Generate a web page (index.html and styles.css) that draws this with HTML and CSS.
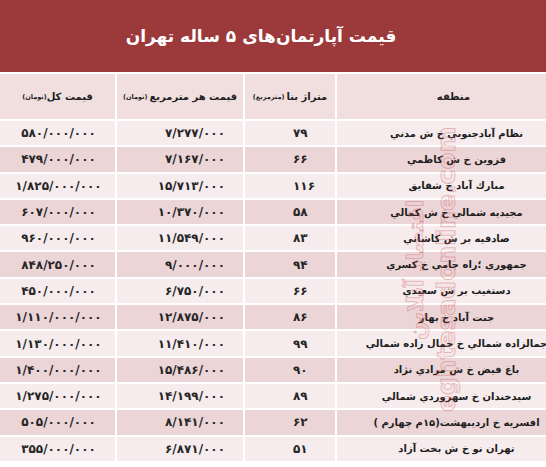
FILE: index.html
```html
<!DOCTYPE html>
<html lang="fa">
<head>
<meta charset="utf-8">
<title>قیمت آپارتمان‌های ۵ ساله تهران</title>
<link rel="stylesheet" href="styles.css">
</head>
<body>
<div class="page">
  <header class="title">قیمت آپارتمان‌های ۵ ساله تهران</header>
  <div class="table" dir="rtl">
    <div class="row head">
      <div class="cell region">منطقه</div>
      <div class="cell area">متراژ بنا <small>(مترمربع)</small></div>
      <div class="cell sqm">قیمت هر مترمربع <small>(تومان)</small></div>
      <div class="cell total">قیمت کل<small>(تومان)</small></div>
    </div>
    <div class="row light"><div class="cell region">نظام آبادجنوبي خ ش مدني</div><div class="cell area num">۷۹</div><div class="cell sqm num">۷/۲۷۷/۰۰۰</div><div class="cell total num">۵۸۰/۰۰۰/۰۰۰</div></div>
    <div class="row dark"><div class="cell region">قزوین خ ش کاظمي</div><div class="cell area num">۶۶</div><div class="cell sqm num">۷/۱۶۷/۰۰۰</div><div class="cell total num">۴۷۹/۰۰۰/۰۰۰</div></div>
    <div class="row light"><div class="cell region">مبارك آباد خ شقايق</div><div class="cell area num">۱۱۶</div><div class="cell sqm num">۱۵/۷۱۳/۰۰۰</div><div class="cell total num">۱/۸۲۵/۰۰۰/۰۰۰</div></div>
    <div class="row dark"><div class="cell region">مجيديه شمالي خ ش كمالي</div><div class="cell area num">۵۸</div><div class="cell sqm num">۱۰/۳۷۰/۰۰۰</div><div class="cell total num">۶۰۷/۰۰۰/۰۰۰</div></div>
    <div class="row light"><div class="cell region">صادقيه بر ش كاشاني</div><div class="cell area num">۸۳</div><div class="cell sqm num">۱۱/۵۴۹/۰۰۰</div><div class="cell total num">۹۶۰/۰۰۰/۰۰۰</div></div>
    <div class="row dark"><div class="cell region">جمهوري ؛راه جامي خ كسري</div><div class="cell area num">۹۴</div><div class="cell sqm num">۹/۰۰۰/۰۰۰</div><div class="cell total num">۸۴۸/۲۵۰/۰۰۰</div></div>
    <div class="row light"><div class="cell region">دستغيب بر ش سعيدي</div><div class="cell area num">۶۶</div><div class="cell sqm num">۶/۷۵۰/۰۰۰</div><div class="cell total num">۴۵۰/۰۰۰/۰۰۰</div></div>
    <div class="row dark"><div class="cell region">جنت آباد خ بهار</div><div class="cell area num">۸۶</div><div class="cell sqm num">۱۲/۸۷۵/۰۰۰</div><div class="cell total num">۱/۱۱۰/۰۰۰/۰۰۰</div></div>
    <div class="row light"><div class="cell region">جمالزاده شمالي خ جمال زاده شمالي</div><div class="cell area num">۹۹</div><div class="cell sqm num">۱۱/۴۱۰/۰۰۰</div><div class="cell total num">۱/۱۳۰/۰۰۰/۰۰۰</div></div>
    <div class="row dark"><div class="cell region">باغ فيض خ ش مرادي نژاد</div><div class="cell area num">۹۰</div><div class="cell sqm num">۱۵/۴۸۶/۰۰۰</div><div class="cell total num">۱/۴۰۰/۰۰۰/۰۰۰</div></div>
    <div class="row light"><div class="cell region">سيدخندان خ سهروردي شمالي</div><div class="cell area num">۸۹</div><div class="cell sqm num">۱۴/۱۹۹/۰۰۰</div><div class="cell total num">۱/۲۷۵/۰۰۰/۰۰۰</div></div>
    <div class="row dark"><div class="cell region">افسريه خ ارديبهشت(۱۵م چهارم )</div><div class="cell area num">۶۲</div><div class="cell sqm num">۸/۱۴۱/۰۰۰</div><div class="cell total num">۵۰۵/۰۰۰/۰۰۰</div></div>
    <div class="row light"><div class="cell region">تهران نو خ ش بخت آزاد</div><div class="cell area num">۵۱</div><div class="cell sqm num">۶/۸۷۱/۰۰۰</div><div class="cell total num">۳۵۵/۰۰۰/۰۰۰</div></div>
  </div>
  <div class="watermark" aria-hidden="true">
    <span class="wm-fa">اقتصاد آنلاین</span>
    <span class="wm-en">eghtesadonline.com</span>
  </div>
</div>
</body>
</html>
```
FILE: styles.css
```css
html, body {
  margin: 0;
  padding: 0;
  background: #ffffff;
}
body {
  font-family: "DejaVu Sans", "Noto Sans", sans-serif;
  color: #1e1e1e;
}
.page {
  position: relative;
  width: 546px;
  height: 467px;
  overflow: hidden;
}
.title {
  height: 72px;
  background: #9c3a3b;
  color: #ffffff;
  font-weight: bold;
  font-size: 17px;
  display: flex;
  align-items: center;
  justify-content: center;
  direction: rtl;
  padding-right: 24px;
  box-sizing: border-box;
}
.table {
  margin-top: 2px;
  display: flex;
  flex-direction: column;
  gap: 2px;
}
.row {
  display: grid;
  grid-template-columns: 209px 90px 126px 115px;
  column-gap: 2px;
  height: 24.3px;
}
.row.head {
  height: 45px;
}
.cell {
  display: flex;
  align-items: center;
  font-size: 10px;
  font-weight: bold;
  white-space: nowrap;
  overflow: hidden;
}
.head .cell { background: #f1dfe0; }
.light .cell { background: #f6eced; }
.dark .cell { background: #ecd5d7; }

.head .cell {
  justify-content: center;
  font-size: 10px;
}
.head small {
  font-size: 6.5px;
  font-weight: bold;
  margin-right: 2px;
}
.head .region { padding-left: 24px; }
.head .total small { margin-right: 0; }

.region {
  justify-content: center;
  padding-left: 30px;
  font-size: 10px;
}
.num {
  direction: ltr;
  font-size: 12px;
  color: #262626;
}
.area.num {
  justify-content: flex-start;
  padding-left: 48px;
}
.sqm.num {
  justify-content: flex-end;
  padding-right: 18px;
}
.total.num {
  justify-content: center;
  padding-left: 2px;
}

.watermark {
  position: absolute;
  left: 395px;
  top: 150px;
  width: 70px;
  height: 280px;
  pointer-events: none;
}
.wm-en, .wm-fa {
  position: absolute;
  font-weight: bold;
  color: rgba(200, 60, 60, 0.05);
  -webkit-text-stroke: 1px rgba(205, 80, 80, 0.35);
  white-space: nowrap;
  transform-origin: 0 0;
  transform: rotate(-90deg);
}
.wm-en {
  font-family: "DejaVu Sans", sans-serif;
  font-size: 25px;
  left: 37px;
  top: 262px;
}
.wm-fa {
  font-size: 22px;
  left: 8px;
  top: 190px;
}
```
